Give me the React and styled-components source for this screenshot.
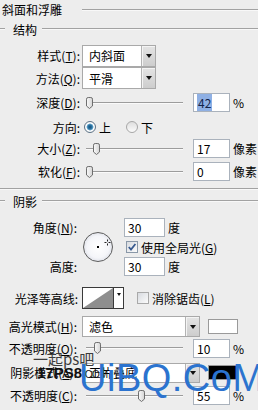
import React from 'react';
import styled, { createGlobalStyle } from 'styled-components';

const Global = createGlobalStyle`
  html, body { margin: 0; padding: 0; background: #ededed; }
  body {
    font-family: "Noto Sans CJK SC", "Liberation Sans", sans-serif;
    font-size: 12px;
    color: #000;
  }
`;

const Panel = styled.div`
  position: relative;
  width: 258px;
  height: 410px;
  overflow: hidden;
  background: #ededed;
  display: flex;
  flex-direction: column;
`;

const Rule = styled.div`
  flex: ${p => (p.$w ? 'none' : 1)};
  width: ${p => (p.$w ? `${p.$w}px` : 'auto')};
  height: 0;
  border-top: 1px solid #a2a2a2;
  border-bottom: 1px solid #f8f8f8;
`;

const TitleRow = styled.div`
  display: flex;
  align-items: center;
  height: 19px;
  padding-left: 2px;
`;

const TitleText = styled.span`
  margin-right: 20px;
  white-space: nowrap;
`;

const LegendRow = styled.div`
  display: flex;
  align-items: center;
  height: ${p => p.$h}px;
`;

const LegendText = styled.span`
  margin: 0 5px 0 8px;
  white-space: nowrap;
`;

const Row = styled.div`
  display: flex;
  align-items: center;
  height: ${p => p.$h}px;
  margin-top: ${p => p.$mt || 0}px;
  white-space: nowrap;
`;

const Label = styled.span`
  flex: none;
  width: 82px;
  box-sizing: border-box;
  padding-right: ${p => p.$pr ?? 2}px;
  text-align: right;
  white-space: nowrap;
`;

const Key = styled.span`
  text-decoration: underline;
`;

const SelectBox = styled.div`
  flex: none;
  display: flex;
  width: ${p => p.$w}px;
  height: ${p => p.$h}px;
  box-sizing: border-box;
  border: 1px solid #a9a9a9;
  background: #fff;
`;

const SelectValue = styled.span`
  flex: 1;
  display: flex;
  align-items: center;
  padding-left: 6px;
`;

const SelectArrow = styled.span`
  width: 14px;
  box-sizing: border-box;
  background: linear-gradient(#e4e4e4, #cdcdcd);
  border-left: 1px solid #b3b3b3;
  box-shadow: inset 1px 1px 0 #f4f4f4;
  display: flex;
  align-items: center;
  justify-content: center;
  &::after {
    content: '';
    border-left: 3.5px solid transparent;
    border-right: 3.5px solid transparent;
    border-top: 4px solid #111;
  }
`;

const SliderBox = styled.div`
  position: relative;
  flex: none;
  width: 105px;
  align-self: stretch;
  display: flex;
  align-items: center;
  padding: 0 4px;
  box-sizing: border-box;
`;

const Track = styled.div`
  flex: 1;
  height: 0;
  border-top: 1px solid #9c9c9c;
  border-bottom: 1px solid #fafafa;
`;

const Thumb = styled.svg`
  position: absolute;
  top: 50%;
  margin-top: -6px;
  left: ${p => 4 + p.$f * 90}px;
`;

const NumBox = styled.div`
  flex: none;
  width: ${p => p.$w}px;
  height: 19px;
  margin-left: ${p => p.$ml || 0}px;
  box-sizing: border-box;
  border: 1px solid #aab2bc;
  background: #fff;
  display: flex;
  align-items: center;
  padding-left: 3px;
`;

const Selected = styled.span`
  background: #8fb0e4;
  color: #14244a;
  padding: 0 1px;
`;

const Unit = styled.span`
  margin-left: 3px;
`;

const Radio = styled.span`
  flex: none;
  width: 12px;
  height: 12px;
  margin-left: ${p => p.$ml}px;
  border-radius: 50%;
  box-sizing: border-box;
  border: 1px solid ${p => (p.$on ? '#5c7184' : '#a7a7a7')};
  background: ${p =>
    p.$on
      ? 'radial-gradient(circle, #154f78 0, #2d78a8 2.2px, #7fb6d6 3.2px, #ffffff 3.8px, #e6e9ee 100%)'
      : 'linear-gradient(#dedede, #fbfbfb)'};
`;

const RadioText = styled.span`
  margin-left: 3px;
`;

const CheckBox = styled.span`
  flex: none;
  width: 12px;
  height: 12px;
  margin-left: ${p => p.$ml}px;
  box-sizing: border-box;
  border: 1px solid ${p => (p.$on ? '#8a98a8' : '#a9a9a9')};
  background: linear-gradient(135deg, #d8dbe0, #fbfbfb);
  display: flex;
  align-items: center;
  justify-content: center;
`;

const CheckText = styled.span`
  margin-left: 3px;
`;

const AngleGrid = styled.div`
  display: grid;
  grid-template-columns: 82px 42px 1fr;
  grid-template-rows: 19px 20px 19px;
  align-items: center;
  margin-top: 10px;
  white-space: nowrap;
`;

const Cell = styled.div`
  grid-column: ${p => p.$c};
  grid-row: ${p => p.$r};
  display: flex;
  align-items: center;
`;

const Dial = styled.div`
  grid-column: 2;
  grid-row: 1 / 4;
  width: 30px;
  height: 30px;
  margin-left: 1px;
  border-radius: 50%;
  box-sizing: border-box;
  border: 1px solid #5d5d5d;
  background: radial-gradient(circle at 50% 50%, #ffffff 0%, #f4f5f9 55%, #c6cad6 100%);
  display: flex;
`;

const ContourBox = styled.div`
  flex: none;
  display: flex;
  width: 42px;
  height: 22px;
  box-sizing: border-box;
  border: 1px solid #3a3a3a;
  background: #fff;
`;

const ContourStrip = styled.div`
  flex: 1;
  border-left: 1px solid #3a3a3a;
  display: flex;
  justify-content: center;
  padding-top: 5px;
  &::after {
    content: '';
    width: 0;
    height: 0;
    border-left: 2.5px solid transparent;
    border-right: 2.5px solid transparent;
    border-top: 3px solid #111;
  }
`;

const Swatch = styled.div`
  flex: none;
  width: 30px;
  height: 15px;
  margin-left: 8px;
  box-sizing: border-box;
  border: 1px solid #9a9a9a;
  background: ${p => p.$c};
`;

const Mark = styled.span`
  position: absolute;
  left: ${p => p.$x}px;
  top: ${p => p.$y}px;
  white-space: nowrap;
  pointer-events: none;
`;

const MarkCn = styled(Mark)`
  font-size: 15px;
  color: #3c3c3c;
  line-height: 1;
`;

const MarkSite = styled(Mark)`
  font-family: "Liberation Sans", Arial, sans-serif;
  font-weight: bold;
  font-size: 15px;
  line-height: 1;
  color: #111;
  & small {
    font-size: 10px;
    font-weight: normal;
  }
`;

const MarkBig = styled(Mark)`
  font-family: "Liberation Sans", Arial, sans-serif;
  font-size: 38px;
  line-height: 38px;
  letter-spacing: 0.5px;
  color: #2b73cf;
`;

const ThumbIcon = ({ f }) => (
  <Thumb $f={f} width="7" height="12" viewBox="0 0 7 12">
    <defs>
      <linearGradient id="tg" x1="0" x2="1">
        <stop offset="0" stopColor="#fafafa" />
        <stop offset="1" stopColor="#d4d4d4" />
      </linearGradient>
    </defs>
    <path d="M0.5 2.2 Q0.5 0.5 2.2 0.5 H4.8 Q6.5 0.5 6.5 2.2 V9 L3.5 11.5 L0.5 9 Z" fill="url(#tg)" stroke="#6e6e6e" />
  </Thumb>
);

const Slider = ({ f }) => (
  <SliderBox>
    <Track />
    <ThumbIcon f={f} />
  </SliderBox>
);

const Select = ({ w, h, children }) => (
  <SelectBox $w={w} $h={h}>
    <SelectValue>{children}</SelectValue>
    <SelectArrow />
  </SelectBox>
);

const Check = ({ on, ml }) => (
  <CheckBox $on={on} $ml={ml}>
    {on && (
      <svg width="10" height="10" viewBox="0 0 10 10">
        <path d="M1.8 5 L4 7.6 L8.4 2" fill="none" stroke="#37598f" strokeWidth="1.8" />
      </svg>
    )}
  </CheckBox>
);

export default function App() {
  return (
    <Panel>
      <Global />
      <TitleRow>
        <TitleText>斜面和浮雕</TitleText>
        <Rule />
      </TitleRow>
      <LegendRow $h={20}>
        <Rule $w={5} />
        <LegendText>结构</LegendText>
        <Rule />
      </LegendRow>

      <Row $h={23} $mt={5}>
        <Label>样式(<Key>T</Key>):</Label>
        <Select w={74} h={22}>内斜面</Select>
      </Row>
      <Row $h={22}>
        <Label>方法(<Key>Q</Key>):</Label>
        <Select w={74} h={22}>平滑</Select>
      </Row>
      <Row $h={27}>
        <Label>深度(<Key>D</Key>):</Label>
        <Slider f={0} />
        <NumBox $w={37} $ml={6}><Selected>42</Selected></NumBox>
        <Unit>%</Unit>
      </Row>
      <Row $h={22}>
        <Label>方向:</Label>
        <Radio $on $ml={2} />
        <RadioText>上</RadioText>
        <Radio $ml={15} />
        <RadioText>下</RadioText>
      </Row>
      <Row $h={21}>
        <Label>大小(<Key>Z</Key>):</Label>
        <Slider f={0.078} />
        <NumBox $w={37} $ml={6}>17</NumBox>
        <Unit>像素</Unit>
      </Row>
      <Row $h={25}>
        <Label>软化(<Key>F</Key>):</Label>
        <Slider f={0} />
        <NumBox $w={37} $ml={6}>0</NumBox>
        <Unit>像素</Unit>
      </Row>

      <LegendRow $h={10}>
        <Rule />
      </LegendRow>
      <LegendRow $h={14}>
        <Rule $w={5} />
        <LegendText>阴影</LegendText>
        <Rule />
      </LegendRow>

      <AngleGrid>
        <Cell $c={1} $r={1}>
          <Label $pr={5}>角度(<Key>N</Key>):</Label>
        </Cell>
        <Cell $c={3} $r={1}>
          <NumBox $w={41}>30</NumBox>
          <Unit>度</Unit>
        </Cell>
        <Dial>
          <svg width="28" height="28" viewBox="0 0 28 28">
            <rect x="13" y="13" width="2" height="2" fill="#000" />
            <path d="M23.5 6.5 V8.5 M23.5 10.5 V12.5 M20.5 9.5 H22.5 M24.5 9.5 H26.5" stroke="#222" strokeWidth="1" />
          </svg>
        </Dial>
        <Cell $c={3} $r={2}>
          <Check on ml={2} />
          <CheckText>使用全局光(<Key>G</Key>)</CheckText>
        </Cell>
        <Cell $c={1} $r={3}>
          <Label $pr={5}>高度:</Label>
        </Cell>
        <Cell $c={3} $r={3}>
          <NumBox $w={41}>30</NumBox>
          <Unit>度</Unit>
        </Cell>
      </AngleGrid>

      <Row $h={22} $mt={11}>
        <Label $pr={4}>光泽等高线:</Label>
        <ContourBox>
          <svg width="30" height="20" viewBox="0 0 30 20">
            <polygon points="0,20 30,0 30,20" fill="#8e8e8e" />
          </svg>
          <ContourStrip />
        </ContourBox>
        <Check ml={13} />
        <CheckText>消除锯齿(<Key>L</Key>)</CheckText>
      </Row>
      <Row $h={21} $mt={7}>
        <Label $pr={5}>高光模式(<Key>H</Key>):</Label>
        <Select w={118} h={21}>滤色</Select>
        <Swatch $c="#ffffff" />
      </Row>
      <Row $h={22}>
        <Label $pr={5}>不透明度(<Key>O</Key>):</Label>
        <Slider f={0.09} />
        <NumBox $w={37} $ml={6}>10</NumBox>
        <Unit>%</Unit>
      </Row>
      <Row $h={23} $mt={2}>
        <Label $pr={5}>阴影模式(<Key>A</Key>):</Label>
        <Select w={118} h={20}>正片叠底</Select>
        <Swatch $c="#000000" />
      </Row>
      <Row $h={23}>
        <Label $pr={5}>不透明度(<Key>C</Key>):</Label>
        <Slider f={0.58} />
        <NumBox $w={37} $ml={6}>55</NumBox>
        <Unit>%</Unit>
      </Row>

      <MarkCn $x={33} $y={351}>一起ps吧</MarkCn>
      <MarkSite $x={37} $y={365}>17PS8<small>.COM</small></MarkSite>
      <MarkBig $x={79} $y={359}>UiBQ.CoM</MarkBig>
    </Panel>
  );
}
